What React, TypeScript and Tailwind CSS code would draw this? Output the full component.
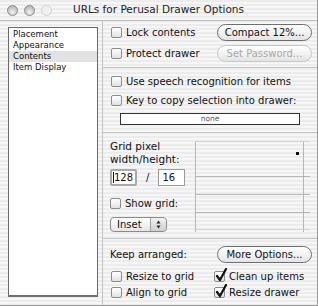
import React from 'react';

const stripes =
  'bg-[repeating-linear-gradient(180deg,#ececec_0px,#ececec_2px,#f6f6f6_2px,#f6f6f6_4px)]';

function Light({ dim }: { dim?: boolean }) {
  return (
    <div
      className={
        dim
          ? 'w-[11px] h-[11px] rounded-full border border-[#d0d0d0] bg-[#f0f0f0]'
          : 'w-[11px] h-[11px] rounded-full border border-[#8a8a8a] bg-[radial-gradient(circle_at_50%_70%,#f4f4f4_0%,#c4c4c4_60%,#a8a8a8_100%)]'
      }
    />
  );
}

function Checkbox({ label, checked, className = '' }: { label: string; checked?: boolean; className?: string }) {
  return (
    <div className={`flex items-center h-[14px] ${className}`}>
      <div className="relative w-[11px] h-[11px] rounded-[2px] border border-[#8c8c8c] bg-[linear-gradient(180deg,#ffffff,#e2e2e2)] shrink-0">
        {checked && (
          <svg className="absolute left-[0px] top-[-4px]" width="13" height="14" viewBox="0 0 13 14">
            <path d="M2 8 L5 12 L11 1" fill="none" stroke="#111" strokeWidth="2.2" strokeLinecap="round" strokeLinejoin="round" />
          </svg>
        )}
      </div>
      <span className="ml-[4px] whitespace-nowrap">{label}</span>
    </div>
  );
}

function Button({ label, disabled }: { label: string; disabled?: boolean }) {
  return (
    <div
      className={`w-[95px] h-[17px] rounded-full border flex items-center justify-center whitespace-nowrap bg-[linear-gradient(180deg,#ffffff_0%,#f2f2f2_50%,#e4e4e4_100%)] ${
        disabled ? 'border-[#c6c6c6] text-[#a8a8a8]' : 'border-[#6e6e6e] text-[#111]'
      }`}
    >
      {label}
    </div>
  );
}

function GridPreview() {
  return (
    <svg width="115" height="92" viewBox="0 0 115 92" className="shrink-0">
      <line x1="0.5" y1="1" x2="0.5" y2="91" stroke="#b6b6b6" />
      <line x1="108.5" y1="1" x2="108.5" y2="91" stroke="#b6b6b6" />
      <line x1="0" y1="0.5" x2="115" y2="0.5" stroke="#d2d2d2" />
      <line x1="0" y1="35.5" x2="115" y2="35.5" stroke="#b6b6b6" />
      <line x1="0" y1="53.5" x2="115" y2="53.5" stroke="#b6b6b6" />
      <line x1="0" y1="71.5" x2="115" y2="71.5" stroke="#b6b6b6" />
      <line x1="0" y1="88.5" x2="115" y2="88.5" stroke="#d2d2d2" />
      <rect x="101" y="11" width="3" height="3" fill="#111" />
    </svg>
  );
}

export default function App() {
  const items = ['Placement', 'Appearance', 'Contents', 'Item Display'];
  return (
    <div
      className={`w-[318px] h-[306px] flex flex-col text-[10px] text-[#111] overflow-hidden border-r border-b border-[#9a9a9a] ${stripes}`}
      style={{ fontFamily: '"DejaVu Sans", "Liberation Sans", sans-serif' }}
    >
      {/* title bar */}
      <div className="h-[21px] shrink-0 flex items-center relative border-b border-[#bdbdbd]">
        <div className="flex items-center gap-[6px] pl-[7px]">
          <Light />
          <Light />
          <Light dim />
        </div>
        <div className="absolute left-0 right-0 text-center text-[10.5px] text-[#222] pointer-events-none">
          URLs for Perusal Drawer Options
        </div>
      </div>

      <div className="flex flex-1 min-h-0">
        {/* left list */}
        <div className="w-[103px] shrink-0 pl-[8px] pt-[6px] pb-[8px] border-r border-[#c4c4c4]">
          <div className="w-[90px] h-full bg-white border border-[#6a6a6a] border-b-2 border-b-[#707070] pt-[1px] text-[8.5px] leading-[11px]">
            {items.map(it => (
              <div key={it} className={`pl-[4px] ${it === 'Contents' ? 'bg-[#e2e2e2]' : ''}`}>
                {it}
              </div>
            ))}
          </div>
        </div>

        {/* right panel */}
        <div className="flex-1 flex flex-col">
          <div className="h-[47px] pt-[3px] pl-[8px] flex flex-col gap-[4px] border-b border-[#c4c4c4]">
            <div className="flex items-center justify-between h-[17px] pr-[5px]">
              <Checkbox label="Lock contents" />
              <Button label="Compact 12%..." />
            </div>
            <div className="flex items-center justify-between h-[17px] pr-[5px]">
              <Checkbox label="Protect drawer" />
              <Button label="Set Password..." disabled />
            </div>
          </div>

          <div className="h-[65px] pt-[6px] pl-[8px] flex flex-col border-b border-[#c4c4c4]">
            <Checkbox label="Use speech recognition for items" />
            <Checkbox label="Key to copy selection into drawer:" className="mt-[5px]" />
            <div className="mt-[6px] ml-[9px] w-[180px] h-[12px] bg-white border border-[#333] flex items-center justify-center text-[7.5px] text-[#555]">
              none
            </div>
          </div>

          <div className="h-[106px] flex border-b border-[#c4c4c4]">
            <div className="w-[92px] pl-[7px] pt-[7px] flex flex-col">
              <div className="leading-[13px] text-[10.5px]">Grid pixel</div>
              <div className="leading-[13px] text-[10.5px]">width/height:</div>
              <div className="flex items-center mt-[3px]">
                <div className="w-[27px] h-[17px] bg-white border-2 border-[#a9a9a9] rounded-[2px] flex items-center pl-[1px]">
                  <span className="border-l border-[#111] leading-[11px]">128</span>
                </div>
                <span className="mx-[9px]">/</span>
                <div className="w-[27px] h-[17px] bg-white border border-[#9a9a9a] flex items-center pl-[3px]">16</div>
              </div>
              <Checkbox label="Show grid:" className="mt-[10px]" />
              <div className="mt-[7px] w-[57px] h-[15px] rounded-[4px] border border-[#8a8a8a] flex bg-[linear-gradient(180deg,#ffffff,#e6e6e6)]">
                <div className="flex-1 pl-[6px] flex items-center">Inset</div>
                <div className="w-[16px] border-l border-[#a0a0a0] rounded-r-[4px] bg-[linear-gradient(180deg,#f2f2f2,#cfcfcf)] flex items-center justify-center">
                  <svg width="5" height="9" viewBox="0 0 5 9">
                    <path d="M2.5 0.5 L4.5 3.5 L0.5 3.5 Z" fill="#222" />
                    <path d="M2.5 8.5 L4.5 5.5 L0.5 5.5 Z" fill="#222" />
                  </svg>
                </div>
              </div>
            </div>
            <div className="pt-[8px]">
              <GridPreview />
            </div>
          </div>

          <div className="flex-1 pl-[7px] pt-[7px]">
            <div className="flex items-center justify-between h-[17px] pr-[5px]">
              <span>Keep arranged:</span>
              <Button label="More Options..." />
            </div>
            <div className="grid grid-cols-[103px_1fr] pl-[1px] mt-[6px] gap-y-[2px]">
              <Checkbox label="Resize to grid" />
              <Checkbox label="Clean up items" checked />
              <Checkbox label="Align to grid" />
              <Checkbox label="Resize drawer" checked />
            </div>
          </div>
        </div>
      </div>
    </div>
  );
}
